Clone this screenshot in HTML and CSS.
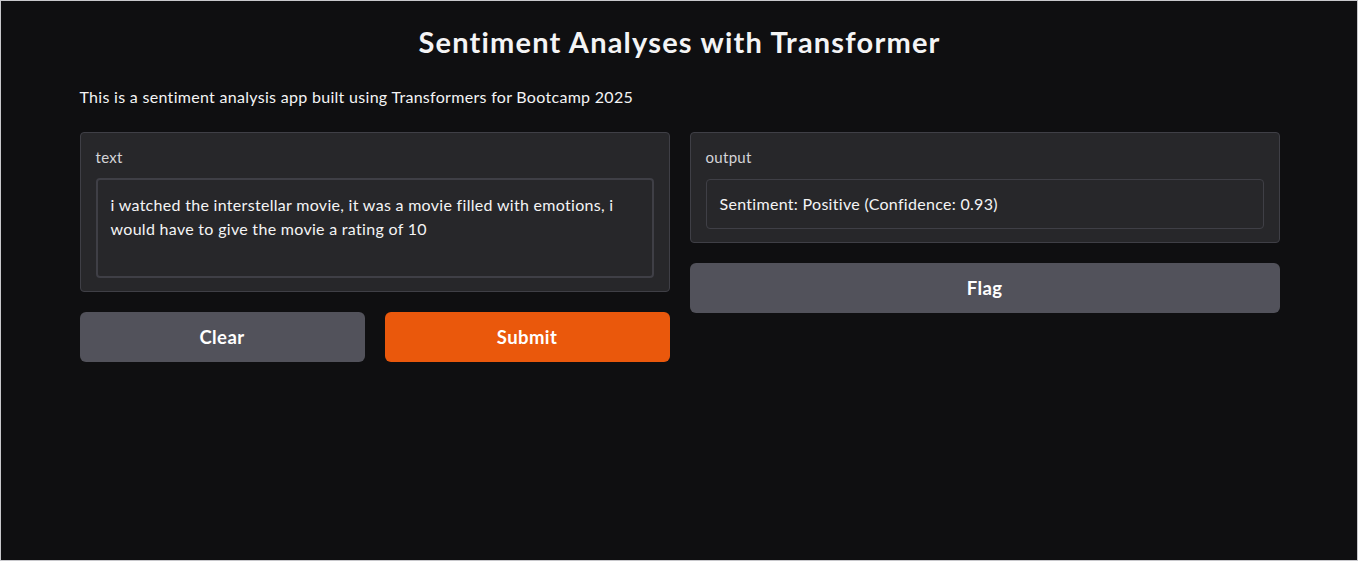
FILE: index.html
```html
<!DOCTYPE html>
<html lang="en">
<head>
<meta charset="utf-8">
<title>Sentiment Analyses with Transformer</title>
<link rel="stylesheet" href="styles.css">
</head>
<body>
<div class="frame">
  <main class="app">
    <h1 class="title">Sentiment Analyses with Transformer</h1>
    <p class="desc">This is a sentiment analysis app built using Transformers for Bootcamp 2025</p>
    <div class="columns">
      <div class="col">
        <div class="block">
          <span class="label">text</span>
          <div class="textarea">i watched the interstellar movie, it was a movie filled with emotions, i would have to give the movie a rating of 10</div>
        </div>
        <div class="btn-row">
          <button class="btn secondary">Clear</button>
          <button class="btn primary">Submit</button>
        </div>
      </div>
      <div class="col">
        <div class="block">
          <span class="label">output</span>
          <div class="output">Sentiment: Positive (Confidence: 0.93)</div>
        </div>
        <button class="btn secondary">Flag</button>
      </div>
    </div>
  </main>
</div>
</body>
</html>
```
FILE: styles.css
```css
html, body {
  margin: 0;
  padding: 0;
  background: #0f0f11;
}
body {
  font-family: Lato, "Noto Sans", sans-serif;
  color: #f4f4f5;
  letter-spacing: 0.3px;
}
.frame {
  box-sizing: border-box;
  height: 561px;
  border: 1px solid #c8c8cc;
  background: #0f0f11;
  padding-top: 20px;
}
.app {
  width: 1200px;
  margin: 0 auto;
  padding-left: 1px;
}
.title {
  margin: 0;
  text-align: center;
  font-size: 29px;
  line-height: 42px;
  font-weight: 700;
  letter-spacing: 1.2px;
  color: #f4f4f5;
}
.desc {
  margin: 22px 0 0;
  font-size: 16px;
  line-height: 24px;
  color: #f4f4f5;
}
.columns {
  display: flex;
  gap: 20px;
  margin-top: 23px;
}
.col {
  flex: 1;
  display: flex;
  flex-direction: column;
  gap: 20px;
}
.block {
  background: #27272a;
  border: 1px solid #3f3f46;
  border-radius: 4px;
  padding: 14px 15px 13px;
  display: flex;
  flex-direction: column;
}
.label {
  font-size: 15px;
  line-height: 20px;
  color: #d4d4d8;
  margin-bottom: 11px;
}
.textarea {
  box-sizing: border-box;
  height: 100px;
  border: 2px solid #3f3f46;
  border-radius: 4px;
  background: #27272a;
  padding: 13px 13px 9px;
  font-size: 16px;
  line-height: 24px;
  color: #f4f4f5;
}
.output {
  box-sizing: border-box;
  height: 50px;
  margin-top: 1px;
  border: 1px solid #3f3f46;
  border-radius: 4px;
  padding: 12px 13px;
  font-size: 16px;
  line-height: 24px;
  color: #f4f4f5;
}
.btn-row {
  display: flex;
  gap: 20px;
}
.btn {
  flex: 1;
  height: 50px;
  border: none;
  border-radius: 6px;
  font-family: Lato, "Noto Sans", sans-serif;
  font-size: 18.5px;
  font-weight: 700;
  letter-spacing: 0.4px;
  color: #ffffff;
  cursor: pointer;
}
.secondary {
  background: #52525b;
}
.primary {
  background: #ea580c;
}
.col > .btn {
  flex: none;
}
```
